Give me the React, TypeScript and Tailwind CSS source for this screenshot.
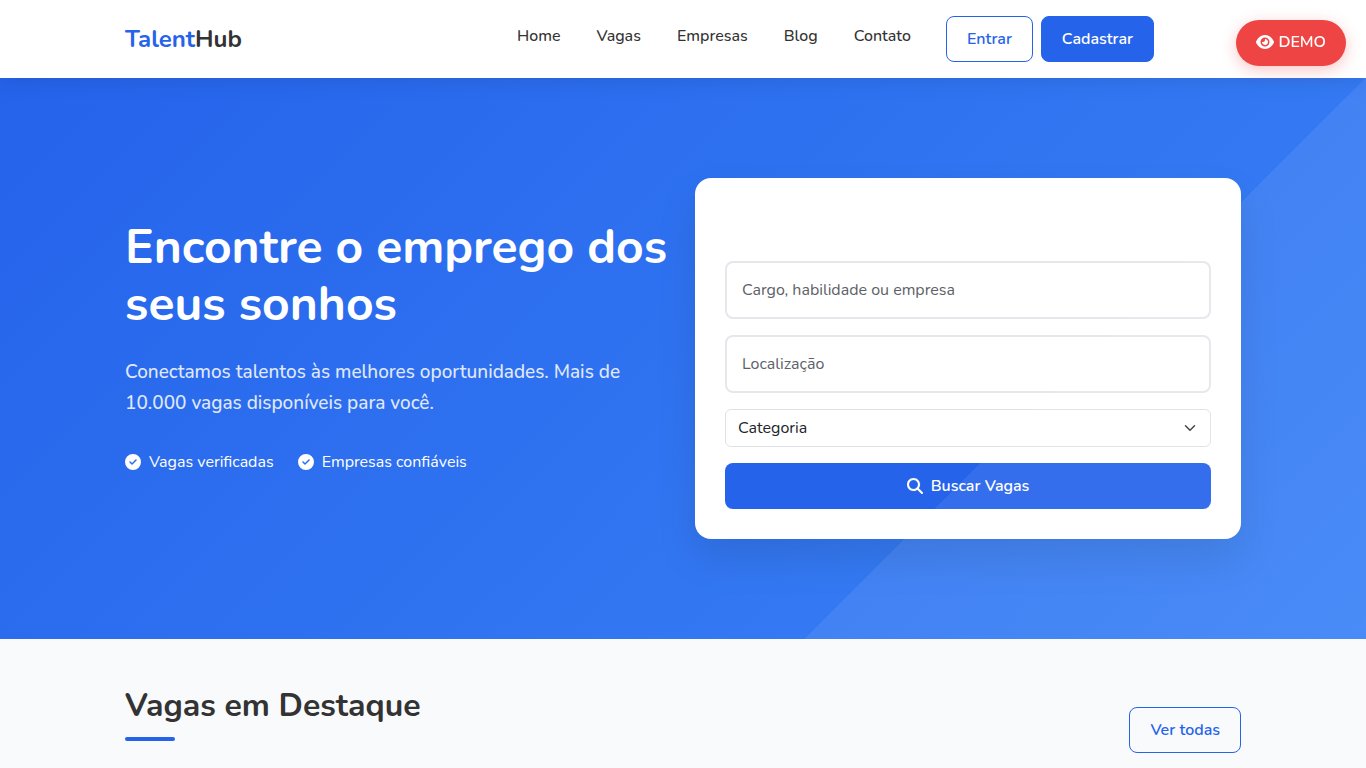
import React, { useState } from "react";
import { FaCircleCheck, FaEye, FaMagnifyingGlass } from "react-icons/fa6";

const navLinks = [
  { label: "Home", href: "#home" },
  { label: "Vagas", href: "#vagas" },
  { label: "Empresas", href: "#empresas" },
  { label: "Blog", href: "#blog" },
  { label: "Contato", href: "#contato" },
];

const highlights = ["Vagas verificadas", "Empresas confiáveis"];

function Header() {
  return (
    <header className="relative z-20 bg-white shadow-[0_2px_20px_rgba(0,0,0,0.1)]">
      <div className="mx-auto flex max-w-[1140px] items-start justify-between px-3 py-4">
        <a href="#home" className="self-center text-2xl font-bold text-[#2563eb]">
          Talent<span className="text-[#333333]">Hub</span>
        </a>

        <div className="flex items-start xl:pr-[87px]">
          <nav className="hidden gap-9 py-2 pr-[35px] font-medium lg:flex">
            {navLinks.map((link) => (
              <a key={link.label} href={link.href} className="hover:text-[#2563eb]">
                {link.label}
              </a>
            ))}
          </nav>
          <div className="flex gap-2">
            <button
              type="button"
              className="rounded-lg border border-[#2563eb] px-5 py-[10px] font-semibold text-[#2563eb]"
            >
              Entrar
            </button>
            <button
              type="button"
              className="rounded-lg border border-[#2563eb] bg-[#2563eb] px-5 py-[10px] font-semibold text-white"
            >
              Cadastrar
            </button>
          </div>
        </div>
      </div>
    </header>
  );
}

function SearchCard() {
  const [keyword, setKeyword] = useState("");
  const [location, setLocation] = useState("");

  return (
    <form
      onSubmit={(e) => e.preventDefault()}
      className="flex flex-col gap-4 rounded-2xl bg-white px-[30px] pt-[83px] pb-[30px] shadow-[0_20px_40px_rgba(0,0,0,0.1)]"
    >
      <input
        type="text"
        aria-label="Cargo, habilidade ou empresa"
        placeholder="Cargo, habilidade ou empresa"
        value={keyword}
        onChange={(e) => setKeyword(e.target.value)}
        className="w-full rounded-lg border-2 border-gray-200 px-[15px] py-[15px] placeholder:text-[#5c6167]"
      />
      <input
        type="text"
        aria-label="Localização"
        placeholder="Localização"
        value={location}
        onChange={(e) => setLocation(e.target.value)}
        className="w-full rounded-lg border-2 border-gray-200 px-[15px] py-[15px] placeholder:text-[#5c6167]"
      />
      <div className="relative">
        <select
          aria-label="Categoria"
          className="w-full appearance-none rounded-md border border-[#dee2e6] bg-white px-3 py-[6px] pr-9 text-[#212529]"
        >
          <option>Categoria</option>
        </select>
        <svg
          viewBox="0 0 16 16"
          className="pointer-events-none absolute top-[13px] right-[13px] h-3 w-4"
          fill="none"
          stroke="#343a40"
          strokeWidth="2"
          strokeLinecap="round"
          strokeLinejoin="round"
        >
          <path d="m2 5 6 6 6-6" />
        </svg>
      </div>
      <button
        type="submit"
        className="flex items-center justify-center gap-2 rounded-lg bg-[#2563eb] py-[11px] font-semibold text-white"
      >
        <FaMagnifyingGlass className="size-4" stroke="currentColor" strokeWidth="4" />
        Buscar Vagas
      </button>
    </form>
  );
}

function Hero() {
  return (
    <section className="relative overflow-hidden bg-linear-135 from-[#2563eb] to-[#3b82f6] py-[100px] text-white">
      <div className="mx-auto grid max-w-[1140px] items-center gap-6 px-3 lg:grid-cols-2">
        <div className="pb-6">
          <h1 className="mb-6 text-5xl leading-[57px] font-bold">
            Encontre o emprego dos seus sonhos
          </h1>
          <p className="mb-[31px] text-[19px] leading-[31px] font-medium opacity-85">
            Conectamos talentos às melhores oportunidades. Mais de 10.000 vagas disponíveis para você.
          </p>
          <ul className="flex gap-6">
            {highlights.map((item) => (
              <li key={item} className="flex items-center gap-2">
                <FaCircleCheck className="size-4" />
                {item}
              </li>
            ))}
          </ul>
        </div>
        <SearchCard />
      </div>

      {/* Diagonal light wedge, drawn over the card too */}
      <div className="pointer-events-none absolute inset-y-0 right-0 aspect-square bg-[linear-gradient(135deg,transparent_50%,rgba(255,255,255,0.07)_50%)]" />
    </section>
  );
}

function FeaturedJobs() {
  return (
    <section id="vagas" className="grow bg-[#f8fafc] pt-12">
      <div className="mx-auto flex max-w-[1140px] items-end justify-between px-3">
        <div className="pb-3">
          <h2 className="text-[32px] leading-[38px] font-bold">Vagas em Destaque</h2>
          <div className="mt-3 h-1 w-[50px] rounded-xs bg-[#2563eb]" />
        </div>
        <a
          href="#todas"
          className="rounded-lg border border-[#2563eb] px-5 py-[10px] font-semibold text-[#2563eb]"
        >
          Ver todas
        </a>
      </div>
    </section>
  );
}

export default function App() {
  return (
    <div className="flex min-h-screen flex-col bg-white font-[Nunito,Lato,sans-serif] text-base text-[#333333]">
      <Header />
      <main className="flex grow flex-col">
        <Hero />
        <FeaturedJobs />
      </main>

      <button
        type="button"
        className="fixed top-5 right-5 z-30 flex items-center gap-1 rounded-full bg-[#ef4444] px-5 pt-[10px] pb-3 font-semibold text-white shadow-[0_4px_15px_rgba(239,68,68,0.3)]"
      >
        <FaEye className="size-[18px]" />
        DEMO
      </button>
    </div>
  );
}
